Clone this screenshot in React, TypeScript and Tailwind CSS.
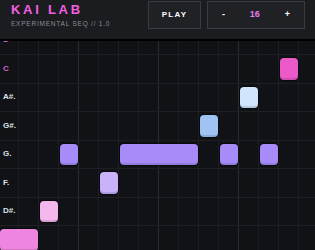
import React from 'react';

interface Note {
    start: number;
    len: number;
    color: string;
}

interface Row {
    label: string;
    root?: boolean;
    notes: Note[];
}

const STEPS = 16;

// piano roll, already scrolled a little past the upper D
const ROWS: Row[] = [
    { label: 'D', root: true, notes: [] },
    { label: 'C', root: true, notes: [{ start: 14, len: 1, color: 'bg-[#ec59c9]' }] },
    { label: 'A#.', notes: [{ start: 12, len: 1, color: 'bg-[#cfe6fd]' }] },
    { label: 'G#.', notes: [{ start: 10, len: 1, color: 'bg-[#9fc4f4]' }] },
    {
        label: 'G.',
        notes: [
            { start: 3, len: 1, color: 'bg-[#a78cf9]' },
            { start: 6, len: 4, color: 'bg-[#a78cf9]' },
            { start: 11, len: 1, color: 'bg-[#a78cf9]' },
            { start: 13, len: 1, color: 'bg-[#a78cf9]' },
        ],
    },
    { label: 'F.', notes: [{ start: 5, len: 1, color: 'bg-[#c8b2f9]' }] },
    { label: 'D#.', notes: [{ start: 2, len: 1, color: 'bg-[#f6b8ec]' }] },
    { label: 'D.', notes: [{ start: 0, len: 2, color: 'bg-[#ef85df]' }] },
];

const font = { fontFamily: '"Liberation Sans", Arial, sans-serif' };

export default function App() {
    return (
        <div className="w-[315px] h-[250px] overflow-hidden flex flex-col bg-[#111216]" style={font}>
            {/* Header */}
            <div className="h-[41px] shrink-0 flex items-start justify-between pl-[11px] pr-[10px] bg-[#1b1c20] border-b-2 border-black">
                <div className="flex flex-col pt-[3px]">
                    <h1 className="text-[13px] leading-none font-bold tracking-[0.21em] text-[#f25fe2]">KAI LAB</h1>
                    <p className="mt-[5px] text-[6.5px] leading-none tracking-[0.12em] text-[#8a8d94]">EXPERIMENTAL SEQ // 1.0</p>
                </div>
                <div className="flex gap-[6px] mt-px">
                    <button className="w-[53px] h-[28px] flex items-center justify-center bg-[#202125] border border-[#3a3b41] text-white text-[8px] font-bold tracking-[0.16em]">
                        PLAY
                    </button>
                    <div className="w-[98px] h-[28px] flex items-center justify-between px-[14px] bg-[#202125] border border-[#3a3b41] text-[9px] font-bold">
                        <button className="text-white">-</button>
                        <span className="text-[#e57fea]">16</span>
                        <button className="text-white">+</button>
                    </div>
                </div>
            </div>

            {/* Grid */}
            <div className="flex-1 overflow-hidden">
                <div className="-ml-px -mt-[14.5px] w-[320px]">
                    {ROWS.map((row, r) => (
                        <div key={r} className="grid grid-cols-[repeat(16,20px)] h-[28.5px] border-b border-[#1e1f24]">
                            <div className="col-[1/-1] row-start-1 flex">
                                {Array.from({ length: STEPS }).map((_, i) => (
                                    <div
                                        key={i}
                                        className={`w-5 h-full border-r ${i % 4 === 3 ? 'border-[#2b2c32]' : 'border-[#1c1d22]'}`}
                                    />
                                ))}
                            </div>
                            <span
                                className={`col-start-1 col-span-2 row-start-1 self-center pl-1 text-[8px] leading-none font-bold ${row.root ? 'text-[#d660d0]' : 'text-[#dde2ea]'}`}
                            >
                                {row.label}
                            </span>
                            {row.notes.map((n, j) => (
                                <div
                                    key={j}
                                    className={`row-start-1 my-[3px] mx-px rounded-[4px] ${n.color} shadow-[0_0_0_1px_rgba(0,0,0,0.55),inset_0_-2px_0_rgba(0,0,0,0.12)]`}
                                    style={{ gridColumn: `${n.start + 1} / span ${n.len}` }}
                                />
                            ))}
                        </div>
                    ))}
                </div>
            </div>
        </div>
    );
}
